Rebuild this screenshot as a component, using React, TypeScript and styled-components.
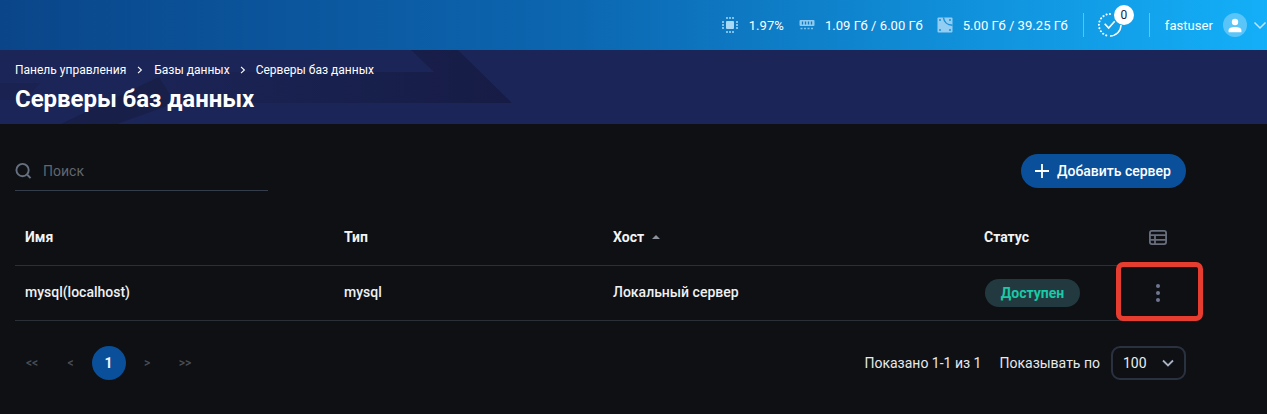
import React from "react";
import styled, { createGlobalStyle } from "styled-components";

const Global = createGlobalStyle`
  html, body { margin: 0; padding: 0; background: #0e1014; }
  body { font-family: Roboto, "Liberation Sans", sans-serif; color: #fff; }
  * { box-sizing: border-box; }
`;
const Page = styled.div`
  width: 1267px; height: 414px; overflow: hidden; background: #0e1014; display: flex; flex-direction: column;
`;
const TopBar = styled.header`
  height: 50px; flex: none; display: flex; align-items: center; justify-content: flex-end;
  background: linear-gradient(90deg, #0a4589 0%, #0c66b0 45%, #1193dd 78%, #13aff8 100%);
`;
const Stat = styled.div<{ $gap: number; $ml: number }>`
  display: flex; align-items: center; gap: ${p => p.$gap}px; margin-left: ${p => p.$ml}px;
  font-size: 13px; font-weight: 400; letter-spacing: .05px; color: #fff; white-space: nowrap;
`;
const VLine = styled.div<{ $ml: number }>`
  width: 1px; height: 24px; background: rgba(255,255,255,.35); margin-left: ${p => p.$ml}px;
`;
const Tasks = styled.div`
  position: relative; width: 24px; height: 24px; margin-left: 14px;
`;
const Badge = styled.div`
  position: absolute; left: 16px; top: -8px; width: 20px; height: 20px; border-radius: 50%; background: #fff; color: #14233f;
  font-size: 12px; display: flex; align-items: center; justify-content: center; padding-bottom: 1px;
`;
const UserName = styled.div`
  margin-left: 15px; font-size: 13px; font-weight: 400; letter-spacing: .05px; color: #fff;
`;
const Avatar = styled.div`
  width: 24px; height: 24px; margin-left: 10px; border-radius: 50%; background: rgba(255,255,255,.3);
  display: flex; align-items: center; justify-content: center;
`;
const Caret = styled.div`
  margin: 0 -1px 0 5px; width: 16px; height: 16px; display: flex;
`;
const Banner = styled.section`
  position: relative; height: 74px; flex: none; background: #1b2557; overflow: hidden; padding: 12px 15px 0;
`;
const BannerArt = styled.svg`
  position: absolute; left: 0; top: 0; width: 560px; height: 74px;
`;
const Crumbs = styled.nav`
  position: relative; display: flex; align-items: center; font-size: 12px; height: 16px; color: #fff;
`;
const CrumbSep = styled.svg<{ $side: number }>`
  width: 6px; height: 8px; margin: 0 ${p => p.$side}px;
`;
const Title = styled.h1`
  position: relative; margin: 6px 0 0; font-size: 24px; line-height: 30px; font-weight: 700; color: #fff; letter-spacing: -.05px;
`;
const Content = styled.main`
  flex: 1; padding: 30px 81px 0 15px; display: flex; flex-direction: column;
`;
const Toolbar = styled.div`
  display: flex; justify-content: space-between; align-items: flex-start; height: 37px;
`;
const Search = styled.div`
  width: 253px; height: 37px; border-bottom: 1px solid #353c4a; display: flex; align-items: center; gap: 11px;
  color: #62666e; font-size: 14px; padding-bottom: 2px;
`;
const AddButton = styled.button`
  height: 34px; width: 165px; border: 0; border-radius: 17px; background: #0a4f99; color: #fff; display: flex; align-items: center;
  padding: 0 0 0 14px; gap: 8px; font: 500 14px Roboto, sans-serif;
`;
const Table = styled.div`
  margin-top: 18px; position: relative;
`;
const Row = styled.div<{ $h: number; $pb: number }>`
  height: ${p => p.$h}px; padding-bottom: ${p => p.$pb}px; display: grid; grid-template-columns: 319px 269px 371px 133px 1fr; align-items: center;
  border-bottom: 1px solid #2b2f38; padding-left: 10px; font-size: 14px; font-weight: 500; color: #f0f1f3;
`;
const HeadCell = styled.div`
  font-weight: 700; display: flex; align-items: center; gap: 6px; font-size: 14px; color: #f2f3f5;
`;
const SortMark = styled.span`
  width: 0; height: 0; border-left: 4px solid transparent; border-right: 4px solid transparent; border-bottom: 4px solid #8d919a; margin-left: 2px; margin-top: 1px;
`;
const StatusPill = styled.span`
  width: 95px; height: 28px; margin: 2px 0 0 1px; border-radius: 14px; background: #223a3f; color: #1cc8a8; font-weight: 700; display: flex;
  align-items: center; justify-content: center; font-size: 14px;
`;
const IconCell = styled.div<{ $mt: number }>`
  display: flex; justify-content: flex-start; padding-left: 32px; margin-top: ${p => p.$mt}px;
`;
const Highlight = styled.div`
  position: absolute; left: 1101px; top: 53px; width: 87px; height: 59px; border: 5px solid #e53d30; border-radius: 7px;
`;
const Dots = styled.div`
  display: flex; flex-direction: column; gap: 3px; margin-left: 7px;
  span { width: 4px; height: 4px; border-radius: 50%; background: #6f7690; }
`;
const Footer = styled.div`
  margin-top: 25px; display: flex; justify-content: space-between; align-items: center; height: 34px;
`;
const Pager = styled.div`
  display: flex; align-items: center;
`;
const PageItem = styled.span<{ $w: number }>`
  width: ${p => p.$w}px; text-align: center; font-size: 12px; font-weight: 500; color: #4a4d55;
`;
const PageNow = styled.span`
  width: 34px; height: 34px; border-radius: 50%; background: #0a4f99; color: #f2f6fb; font-size: 14px; font-weight: 700;
  display: flex; align-items: center; justify-content: center; padding-right: 1px;
`;
const Range = styled.div`
  display: flex; align-items: center; font-size: 14px; color: #e7e8ea;
`;
const PerPage = styled.span`
  margin-left: 18px;
`;
const Select = styled.div`
  margin-left: 11px; width: 75px; height: 34px; border: 2px solid #2a3140; border-radius: 9px; display: flex; align-items: center;
  justify-content: space-between; padding: 0 10px; font-size: 14px; font-weight: 400; color: #eceded;
`;

const Sep = ({ side }: { side: number }) => (
  <CrumbSep $side={side} viewBox="0 0 6 8"><path d="M1 .8 4.4 4 1 7.2" fill="none" stroke="#fff" strokeWidth="1.1" /></CrumbSep>
);

export default function App() {
  return (
    <Page>
      <Global />
      <TopBar>
        <Stat $gap={11} $ml={0}>
          <svg width="16" height="16" viewBox="0 0 16 16">
            <rect x="4" y="4" width="8" height="8" rx="1" fill="#a9d9f6" />
            <path d="M1 4v8M15 4v8M4 1h8M4 15h8" stroke="#7cc0ec" strokeWidth="2" strokeDasharray="2 1" fill="none" />
          </svg>
          1.97%
        </Stat>
        <Stat $gap={10} $ml={15}>
          <svg width="16" height="14" viewBox="0 0 16 14">
            <rect x="0.5" y="2" width="15" height="6" rx="1" fill="#8ccaef" />
            <path d="M3.500 3.500v3M6.500 3.500v3M9.500 3.500v3M12.500 3.500v3" stroke="#1478c0" strokeWidth="1.300" />
            <path d="M1.500 10.500h13" stroke="#7cc0ec" strokeWidth="1.600" strokeDasharray="2 1.500" />
          </svg>
          1.09 Гб / 6.00 Гб
        </Stat>
        <Stat $gap={10} $ml={14}>
          <svg width="16" height="16" viewBox="0 0 16 16">
            <rect x=".5" y=".5" width="15" height="15" rx="1" fill="#93cdf2" />
            <path d="M6.500 .5c.4 4.500 4 7.500 9 7.700" fill="none" stroke="#1590dc" strokeWidth="1.400" />
            <circle cx="3" cy="13" r="1" fill="#1590dc" /><circle cx="13" cy="13" r="1" fill="#1590dc" />
            <circle cx="3" cy="3" r="1" fill="#1590dc" /><circle cx="13" cy="3" r="1" fill="#1590dc" />
          </svg>
          5.00 Гб / 39.25 Гб
        </Stat>
        <VLine $ml={15} />
        <Tasks>
          <svg width="24" height="24" viewBox="0 0 24 24" fill="none" stroke="#fff">
            <path d="M12 23A11 11 0 0 0 23 12" strokeWidth="1.500" />
            <path d="M12 1A11 11 0 0 0 9 22.600" strokeWidth="2" strokeDasharray=".1 3.300" strokeLinecap="round" />
            <path d="M6.700 10.700 10.700 15 16.700 8.300" strokeWidth="1.600" />
          </svg>
          <Badge>0</Badge>
        </Tasks>
        <VLine $ml={27} />
        <UserName>fastuser</UserName>
        <Avatar>
          <svg width="14" height="15" viewBox="0 0 13 14" fill="#fff">
            <circle cx="6.500" cy="3.800" r="3" />
            <path d="M.5 11.500C.5 9.500 3 8.500 6.500 8.500s6 1 6 3v1.700H.5z" />
          </svg>
        </Avatar>
        <Caret>
          <svg width="16" height="16" viewBox="0 0 16 16" fill="none" stroke="#bfe4fb" strokeWidth="1.500"><path d="M2.500 5.500 8 11l5.500-5.500" /></svg>
        </Caret>
      </TopBar>
      <Banner>
        <BannerArt viewBox="0 0 560 74">
          <defs>
            <linearGradient id="bandFade" x1="0" x2="1" y1="0" y2="0">
              <stop offset="0" stopColor="#1b2557" />
              <stop offset="1" stopColor="#161c45" />
            </linearGradient>
          </defs>
          <path d="M0 33H40L25 50H0z" fill="#192250" />
          <path d="M411 0H458L512 53H118L158 22H434z" fill="url(#bandFade)" />
          <path d="M61 74 159 27 175 53 117 74z" fill="#182049" />
        </BannerArt>
        <Crumbs>
          Панель управления<Sep side={11} />Базы данных<Sep side={10} />Серверы баз данных
        </Crumbs>
        <Title>Серверы баз данных</Title>
      </Banner>
      <Content>
        <Toolbar>
          <Search>
            <svg width="17" height="18" viewBox="0 0 18 18" fill="none" stroke="#667080" strokeWidth="2"><circle cx="8" cy="8" r="6.500" /><path d="M13 13l3.500 3.500" /></svg>
            Поиск
          </Search>
          <AddButton>
            <svg width="14" height="14" viewBox="0 0 14 14" stroke="#fff" strokeWidth="1.800"><path d="M7 0v14M0 7h14" /></svg>
            Добавить сервер
          </AddButton>
        </Toolbar>
        <Table>
          <Row $h={57} $pb={1}>
            <HeadCell>Имя</HeadCell>
            <HeadCell>Тип</HeadCell>
            <HeadCell>Хост <SortMark /></HeadCell>
            <HeadCell>Статус</HeadCell>
            <IconCell $mt={2}>
              <svg width="18" height="15" viewBox="0 0 18 15" fill="none" stroke="#666d7c" strokeWidth="1.800"><rect x=".9" y=".9" width="16.200" height="13.200" rx="2" /><path d="M.9 5.200h16.200M.9 9.800h16.200M6 5.200v9" /></svg>
            </IconCell>
          </Row>
          <Row $h={55} $pb={2}>
            <div>mysql(localhost)</div>
            <div>mysql</div>
            <div>Локальный сервер</div>
            <div><StatusPill>Доступен</StatusPill></div>
            <IconCell $mt={2}><Dots><span /><span /><span /></Dots></IconCell>
          </Row>
          <Highlight />
        </Table>
        <Footer>
          <Pager>
            <PageItem $w={34}>&lt;&lt;</PageItem>
            <PageItem $w={43}>&lt;</PageItem>
            <PageNow>1</PageNow>
            <PageItem $w={42}>&gt;</PageItem>
            <PageItem $w={34}>&gt;&gt;</PageItem>
          </Pager>
          <Range>
            Показано 1-1 из 1
            <PerPage>Показывать по</PerPage>
            <Select>100
              <svg width="12" height="8" viewBox="0 0 12 8" fill="none" stroke="#a9b1c4" strokeWidth="1.800"><path d="M1 1.500 6 6.500l5-5" /></svg>
            </Select>
          </Range>
        </Footer>
      </Content>
    </Page>
  );
}
